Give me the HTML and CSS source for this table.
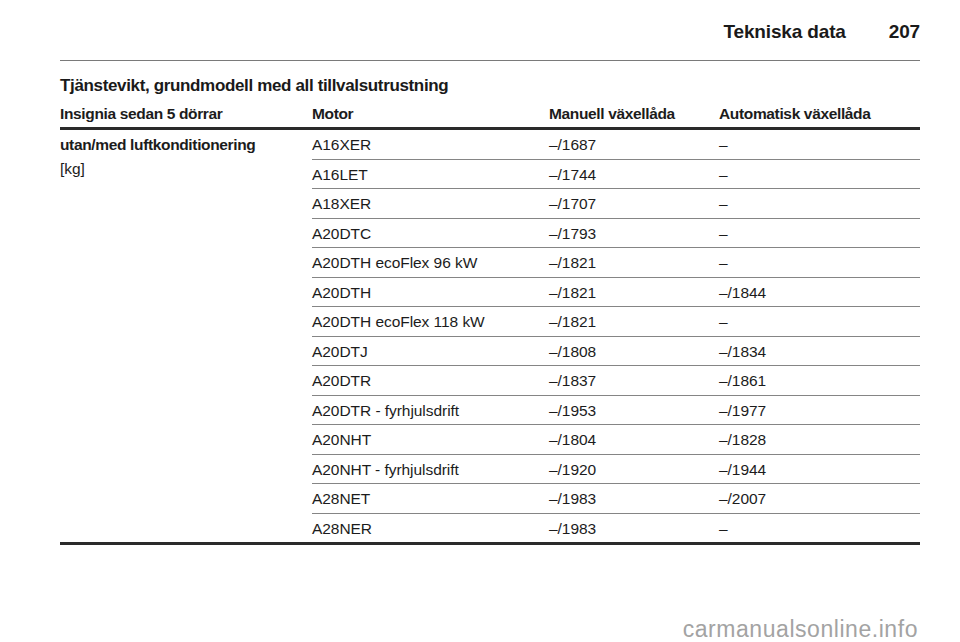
FILE: index.html
```html
<!DOCTYPE html>
<html lang="sv">
<head>
<meta charset="utf-8">
<title>Tekniska data 207</title>
<link rel="stylesheet" href="styles.css">
</head>
<body>
<div class="page">
  <header class="running-head">
    <span class="section">Tekniska data</span>
    <span class="pagenum">207</span>
  </header>
  <h2 class="title">Tjänstevikt, grundmodell med all tillvalsutrustning</h2>
  <table class="data">
    <colgroup>
      <col class="c1"><col class="c2"><col class="c3"><col class="c4">
    </colgroup>
    <thead>
      <tr>
        <th>Insignia sedan 5 dörrar</th>
        <th>Motor</th>
        <th>Manuell växellåda</th>
        <th>Automatisk växellåda</th>
      </tr>
    </thead>
    <tbody>
      <tr>
        <td class="group" rowspan="14"><div class="group-name">utan/med luftkonditionering</div><div class="unit">[kg]</div></td>
        <td>A16XER</td><td>–/1687</td><td>–</td>
      </tr>
      <tr><td>A16LET</td><td>–/1744</td><td>–</td></tr>
      <tr><td>A18XER</td><td>–/1707</td><td>–</td></tr>
      <tr><td>A20DTC</td><td>–/1793</td><td>–</td></tr>
      <tr><td>A20DTH ecoFlex 96 kW</td><td>–/1821</td><td>–</td></tr>
      <tr><td>A20DTH</td><td>–/1821</td><td>–/1844</td></tr>
      <tr><td>A20DTH ecoFlex 118 kW</td><td>–/1821</td><td>–</td></tr>
      <tr><td>A20DTJ</td><td>–/1808</td><td>–/1834</td></tr>
      <tr><td>A20DTR</td><td>–/1837</td><td>–/1861</td></tr>
      <tr><td>A20DTR - fyrhjulsdrift</td><td>–/1953</td><td>–/1977</td></tr>
      <tr><td>A20NHT</td><td>–/1804</td><td>–/1828</td></tr>
      <tr><td>A20NHT - fyrhjulsdrift</td><td>–/1920</td><td>–/1944</td></tr>
      <tr><td>A28NET</td><td>–/1983</td><td>–/2007</td></tr>
      <tr class="last"><td>A28NER</td><td>–/1983</td><td>–</td></tr>
    </tbody>
  </table>
  <div class="watermark">carmanualsonline.info</div>
</div>
</body>
</html>
```

FILE: styles.css
```css
html, body {
  margin: 0;
  padding: 0;
  background: #ffffff;
}

body {
  font-family: "Liberation Sans", Arial, sans-serif;
  color: #1c1c1c;
  width: 960px;
  height: 642px;
  overflow: hidden;
}

.page {
  padding: 20px 40px 0 60px;
}

.running-head {
  display: flex;
  justify-content: flex-end;
  align-items: center;
  gap: 43px;
  height: 24px;
  line-height: 24px;
  padding-bottom: 16px;
  border-bottom: 1.5px solid #7a7a7a;
  font-size: 19px;
  font-weight: 700;
  letter-spacing: -0.15px;
  color: #1a1a1a;
}

.title {
  margin: 14px 0 0 0;
  font-size: 17px;
  line-height: 22px;
  font-weight: 700;
  letter-spacing: -0.35px;
  color: #1a1a1a;
}

.data {
  margin-top: 7px;
  width: 860px;
  table-layout: fixed;
  border-collapse: collapse;
  font-size: 15.5px;
}

.c1 { width: 252px; }
.c2 { width: 237px; }
.c3 { width: 170px; }
.c4 { width: 201px; }

.data th {
  text-align: left;
  font-weight: 700;
  letter-spacing: -0.35px;
  line-height: 20px;
  padding: 0 0 3px 0;
  border-bottom: 3px solid #2a2a2a;
  white-space: nowrap;
}

.data td {
  padding: 5px 0 3.5px 0;
  line-height: 20px;
  border-bottom: 1px solid #858585;
  vertical-align: top;
  white-space: nowrap;
  letter-spacing: -0.05px;
}

.data td.group {
  border-bottom: 3px solid #2a2a2a;
  padding-top: 5px;
}

.data tr.last td {
  border-bottom: 3px solid #2a2a2a;
}

.group-name {
  font-weight: 700;
  letter-spacing: -0.35px;
}

.unit {
  margin-top: 4px;
}

.watermark {
  margin-top: 71px;
  text-align: right;
  padding-right: 2px;
  font-size: 23px;
  line-height: 26px;
  letter-spacing: 0.55px;
  color: #a3a3a3;
}
```
